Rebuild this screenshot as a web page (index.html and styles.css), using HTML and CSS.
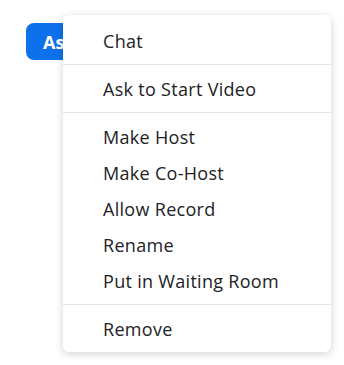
FILE: index.html
```html
<!DOCTYPE html>
<html lang="en">
<head>
    <meta charset="UTF-8">
    <meta name="viewport" content="width=device-width, initial-scale=1.0">
    <title>Participant Menu</title>
    <link rel="stylesheet" href="styles.css">
</head>
<body>
    <main class="stage">
        <button class="ask-btn">Ask</button>

        <div class="menu">
            <div class="menu-group">
                <div class="menu-item">Chat</div>
            </div>
            <div class="menu-group">
                <div class="menu-item">Ask to Start Video</div>
            </div>
            <div class="menu-group">
                <div class="menu-item">Make Host</div>
                <div class="menu-item">Make Co-Host</div>
                <div class="menu-item">Allow Record</div>
                <div class="menu-item">Rename</div>
                <div class="menu-item">Put in Waiting Room</div>
            </div>
            <div class="menu-group">
                <div class="menu-item">Remove</div>
            </div>
        </div>
    </main>
</body>
</html>
```

FILE: styles.css
```css
:root {
--biru: #0e71eb;
--garis: #e4e4e4;
--teks: #222226;
}

*,
*::before,
*::after {
box-sizing: border-box;
}

body {
font-family: "Open Sans", "Noto Sans", sans-serif;
background-color: #ffffff;
margin: 0;
}

.stage {
position: relative;
height: 365px;
padding: 15px 0 0 63px;
}

.ask-btn {
position: absolute;
top: 23px;
left: 26px;
width: 60px;
height: 37px;
padding: 0 0 0 17px;
text-align: left;
border: none;
border-radius: 8px;
background-color: var(--biru);
color: white;
font-family: inherit;
font-size: 18px;
font-weight: 700;
}

.menu {
position: relative;
z-index: 1;
width: 268px;
background-color: #ffffff;
border-radius: 6px;
box-shadow: 0 2px 8px rgba(0, 0, 0, 0.18);
}

.menu-group {
padding: 6px 0 5px;
border-top: 1px solid var(--garis);
}

.menu-group:first-child {
border-top: none;
padding-top: 8px;
}

.menu-item {
height: 36px;
display: flex;
align-items: center;
padding-left: 40px;
font-size: 18px;
letter-spacing: 0.3px;
color: var(--teks);
}
```
